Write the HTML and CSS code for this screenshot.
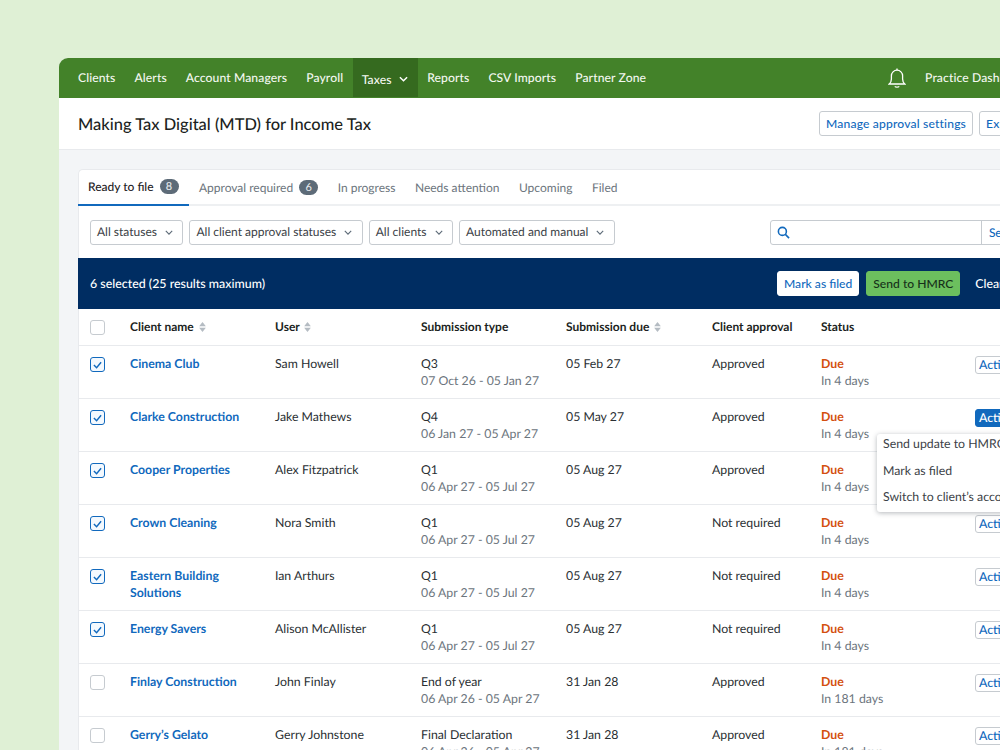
FILE: index.html
```html
<!DOCTYPE html>
<html lang="en">
<head>
<meta charset="utf-8">
<title>Making Tax Digital</title>
<link rel="stylesheet" href="styles.css">
</head>
<body>
<div class="app">
  <nav class="nav">
    <a class="nav-item">Clients</a>
    <a class="nav-item">Alerts</a>
    <a class="nav-item">Account Managers</a>
    <a class="nav-item">Payroll</a>
    <a class="nav-item active">Taxes <svg class="nav-chev" viewBox="0 0 10 6"><path d="M1 1l4 4 4-4"/></svg></a>
    <a class="nav-item">Reports</a>
    <a class="nav-item">CSV Imports</a>
    <a class="nav-item">Partner Zone</a>
    <svg class="bell" viewBox="0 0 18 20"><path d="M1.200 16c1.300-1.100 2.200-2.300 2.200-5V7.800a5.600 5.600 0 0 1 11.200 0V11c0 2.700.9 3.900 2.200 5z"/><path d="M6.800 18.400c.8 1 3.600 1 4.400 0"/><path d="M9 .6v1.600"/></svg>
    <a class="nav-item dash">Practice Dashboard</a>
  </nav>
  <header class="head">
    <h1>Making Tax Digital (MTD) for Income Tax</h1>
    <div class="head-actions">
      <button class="btn wide">Manage approval settings</button>
      <button class="btn wide">Export</button>
    </div>
  </header>
  <main class="content">
    <section class="card">
      <div class="tabs">
        <div class="tab current">Ready to file <span class="count">8</span></div>
        <div class="tab">Approval required <span class="count">6</span></div>
        <div class="tab">In progress</div>
        <div class="tab">Needs attention</div>
        <div class="tab">Upcoming</div>
        <div class="tab">Filed</div>
      </div>
      <div class="filters">
        <div class="select">All statuses <svg class="chev" viewBox="0 0 10 6"><path d="M1 1l4 4 4-4"/></svg></div>
        <div class="select">All client approval statuses <svg class="chev" viewBox="0 0 10 6"><path d="M1 1l4 4 4-4"/></svg></div>
        <div class="select">All clients <svg class="chev" viewBox="0 0 10 6"><path d="M1 1l4 4 4-4"/></svg></div>
        <div class="select">Automated and manual <svg class="chev" viewBox="0 0 10 6"><path d="M1 1l4 4 4-4"/></svg></div>
        <div class="search">
          <span class="search-field"><svg class="search-icon" viewBox="0 0 14 14"><circle cx="5.800" cy="5.800" r="4.300"/><path d="M9 9l4 4"/></svg></span>
          <span class="search-btn">Search</span>
        </div>
      </div>
      <div class="bulk">
        <span class="bulk-text">6 selected (25 results maximum)</span>
        <button class="btn small">Mark as filed</button>
        <button class="btn small green">Send to HMRC</button>
        <span class="clear">Clear</span>
      </div>
      <div class="row header">
        <span class="box"></span>
        <span>Client name <svg class="sort" viewBox="0 0 8 12"><path d="M4 0l4 5H0zM4 12l4-5H0z"/></svg></span>
        <span>User <svg class="sort" viewBox="0 0 8 12"><path d="M4 0l4 5H0zM4 12l4-5H0z"/></svg></span>
        <span>Submission type</span>
        <span>Submission due <svg class="sort" viewBox="0 0 8 12"><path d="M4 0l4 5H0zM4 12l4-5H0z"/></svg></span>
        <span>Client approval</span>
        <span>Status</span>
        <span></span>
      </div>
      <div class="row">
        <span class="box on"><svg viewBox="0 0 10 8"><path d="M1 4l3 3 5-6"/></svg></span>
        <a class="client">Cinema Club</a>
        <span>Sam Howell</span>
        <span>Q3<small>07 Oct 26 - 05 Jan 27</small></span>
        <span>05 Feb 27</span>
        <span>Approved</span>
        <span><b class="due">Due</b><small>In 4 days</small></span>
        <span class="act">Actions</span>
      </div>
      <div class="row">
        <span class="box on"><svg viewBox="0 0 10 8"><path d="M1 4l3 3 5-6"/></svg></span>
        <a class="client">Clarke Construction</a>
        <span>Jake Mathews</span>
        <span>Q4<small>06 Jan 27 - 05 Apr 27</small></span>
        <span>05 May 27</span>
        <span>Approved</span>
        <span><b class="due">Due</b><small>In 4 days</small></span>
        <span class="act open">Actions</span>
        <div class="menu">
          <div>Send update to HMRC</div>
          <div>Mark as filed</div>
          <div>Switch to client’s account</div>
        </div>
      </div>
      <div class="row">
        <span class="box on"><svg viewBox="0 0 10 8"><path d="M1 4l3 3 5-6"/></svg></span>
        <a class="client">Cooper Properties</a>
        <span>Alex Fitzpatrick</span>
        <span>Q1<small>06 Apr 27 - 05 Jul 27</small></span>
        <span>05 Aug 27</span>
        <span>Approved</span>
        <span><b class="due">Due</b><small>In 4 days</small></span>
        <span class="act">Actions</span>
      </div>
      <div class="row">
        <span class="box on"><svg viewBox="0 0 10 8"><path d="M1 4l3 3 5-6"/></svg></span>
        <a class="client">Crown Cleaning</a>
        <span>Nora Smith</span>
        <span>Q1<small>06 Apr 27 - 05 Jul 27</small></span>
        <span>05 Aug 27</span>
        <span>Not required</span>
        <span><b class="due">Due</b><small>In 4 days</small></span>
        <span class="act">Actions</span>
      </div>
      <div class="row">
        <span class="box on"><svg viewBox="0 0 10 8"><path d="M1 4l3 3 5-6"/></svg></span>
        <a class="client">Eastern Building Solutions</a>
        <span>Ian Arthurs</span>
        <span>Q1<small>06 Apr 27 - 05 Jul 27</small></span>
        <span>05 Aug 27</span>
        <span>Not required</span>
        <span><b class="due">Due</b><small>In 4 days</small></span>
        <span class="act">Actions</span>
      </div>
      <div class="row">
        <span class="box on"><svg viewBox="0 0 10 8"><path d="M1 4l3 3 5-6"/></svg></span>
        <a class="client">Energy Savers</a>
        <span>Alison McAllister</span>
        <span>Q1<small>06 Apr 27 - 05 Jul 27</small></span>
        <span>05 Aug 27</span>
        <span>Not required</span>
        <span><b class="due">Due</b><small>In 4 days</small></span>
        <span class="act">Actions</span>
      </div>
      <div class="row">
        <span class="box"></span>
        <a class="client">Finlay Construction</a>
        <span>John Finlay</span>
        <span>End of year<small>06 Apr 26 - 05 Apr 27</small></span>
        <span>31 Jan 28</span>
        <span>Approved</span>
        <span><b class="due">Due</b><small>In 181 days</small></span>
        <span class="act">Actions</span>
      </div>
      <div class="row">
        <span class="box"></span>
        <a class="client">Gerry’s Gelato</a>
        <span>Gerry Johnstone</span>
        <span>Final Declaration<small>06 Apr 26 - 05 Apr 27</small></span>
        <span>31 Jan 28</span>
        <span>Approved</span>
        <span><b class="due">Due</b><small>In 181 days</small></span>
        <span class="act">Actions</span>
      </div>
    </section>
  </main>
</div>
</body>
</html>
```
FILE: styles.css
```css
* { box-sizing: border-box; }
html, body { margin: 0; height: 750px; overflow: hidden; }
body {
  background: #dff0d5;
  font-family: "Lato", "Liberation Sans", sans-serif;
  font-size: 12.300px;
  color: #2a2f33;
  text-rendering: geometricPrecision;
}
.app {
  width: 1160px;
  margin: 58px 0 0 59px;
  background: #f3f5f7;
  border-radius: 9px 9px 0 0;
  overflow: hidden;
  height: 900px;
}
.nav {
  height: 40px;
  background: #438229;
  display: flex;
  align-items: stretch;
  padding-left: 9.500px;
  color: #fff;
}
.nav-item {
  display: flex;
  align-items: center;
  padding: 0 9.500px 1px;
  font-weight: 500;
  font-size: 12.150px;
  letter-spacing: 0.1px;
  color: #f4f8f1;
}
.nav-item.active {
  background: #356a1f;
  padding: 3px 10px 0 9px;
  margin: 0 0 1px;
}
.nav-chev { width: 9px; height: 6px; margin-left: 7px; fill: none; stroke: #fff; stroke-width: 1.600; }
.bell { width: 18px; height: 20px; margin: 10px 9.500px 0 232.500px; fill: none; stroke: #fff; stroke-width: 1.300; }
.dash { white-space: nowrap; }
.head {
  height: 52px;
  background: #fff;
  border-bottom: 1px solid #e8eaed;
  display: flex;
  align-items: center;
  padding: 0 0 1px 19px;
}
.head h1 {
  margin: 1px 0 0;
  font-size: 16.450px;
  font-weight: 500;
  color: #1c1f22;
}
.head-actions { margin-left: 448px; display: flex; gap: 6px; }
.btn {
  height: 25px;
  padding: 0 6px;
  font: inherit;
  font-weight: 500;
  font-size: 12.100px;
  color: #1169bd;
  background: #fff;
  border: 1px solid #c6cbd0;
  border-radius: 3px;
  white-space: nowrap;
}
.btn.wide { letter-spacing: 0.17px; }
.content { padding: 19px 0 0 19px; }
.card {
  background: #fff;
  border: 1px solid #e8eaed;
  border-right: 0;
  border-radius: 5px 0 0 0;
  width: 1100px;
}
.tabs {
  display: flex;
  height: 36px;
  border-bottom: 2px solid #eef0f2;
  margin-left: -1px;
  font-size: 12px;
}
.tab {
  height: 36px;
  display: flex;
  align-items: center;
  padding: 0 9.500px 2px 10px;
  color: #6c757d;
  white-space: nowrap;
}
.tab.current {
  color: #1f2326;
  font-weight: 500;
  border-bottom: 2px solid #1169bd;
  width: 111px;
}
.count {
  display: inline-block;
  width: 19px;
  height: 15px;
  line-height: 15px;
  margin-left: 6px;
  border-radius: 8px;
  background: #5d6b78;
  color: #e8ebee;
  font-size: 11px;
  text-align: center;
}
.filters {
  display: flex;
  height: 52px;
  align-items: center;
  gap: 6px;
  padding-left: 11px;
  font-size: 12px;
}
.select {
  height: 25px;
  padding: 0 6px 1px;
  display: flex;
  align-items: center;
  border: 1px solid #c6cbd0;
  border-radius: 3px;
  white-space: nowrap;
  color: #3c4247;
}
.chev { width: 8px; height: 5px; margin: 1px 3.500px 0 8px; fill: none; stroke: #5d6b78; stroke-width: 1.400; }
.search { margin-left: 149px; display: flex; height: 25px; border: 1px solid #c6cbd0; border-radius: 3px; }
.search-field { width: 211px; padding: 5px 0 0 6px; border-right: 1px solid #c6cbd0; }
.search-icon { display: block; width: 13px; height: 13px; fill: none; stroke: #1169bd; stroke-width: 1.700; }
.search-btn { padding: 0 7px; line-height: 23px; color: #1169bd; font-weight: 500; }
.bulk {
  height: 51px;
  margin-left: -1px;
  background: #002d62;
  color: #fff;
  display: flex;
  align-items: center;
  padding-left: 12px;
  font-weight: 500;
}
.bulk-text { width: 687px; font-size: 12.400px; }
.btn.small { height: 25px; border-color: #fff; }
.btn.green { margin-left: 7px; background: #6cbf5e; border-color: #6cbf5e; color: #16301a; }
.clear { margin-left: 15px; }
.row {
  position: relative;
  display: grid;
  grid-template-columns: 40px 145px 146px 145px 146px 109px 154px 80px;
  height: 53px;
  margin-left: -1px;
  padding: 9px 0 0 12px;
  border-bottom: 1px solid #e8eaed;
  line-height: 17px;
}
.row.header {
  height: 37px;
  padding-top: 9px;
  font-weight: 700;
  font-size: 12px;
  color: #1c1f22;
}
.row small { display: block; margin-top: -0.500px; font-size: 12.300px; color: #6c757d; }
.sort { width: 7px; height: 10px; margin-left: 2px; fill: #b5bcc3; vertical-align: -1px; }
.box {
  width: 15px;
  height: 15px;
  margin-top: 2px;
  border: 1px solid #c6cbd0;
  border-radius: 3px;
  background: #fff;
  display: flex;
  align-items: center;
  justify-content: center;
}
.box.on { border-color: #1169bd; background: #f4f9fe; }
.box svg { width: 9px; height: 8px; fill: none; stroke: #1169bd; stroke-width: 1.600; }
.client { color: #1169bd; font-weight: 700; padding-right: 20px; }
.due { color: #d4500f; font-weight: 700; }
.act {
  align-self: start;
  height: 18px;
  line-height: 16px;
  margin-top: 1px;
  width: 60px;
  padding-left: 3px;
  border: 1px solid #c6cbd0;
  border-radius: 3px;
  color: #1169bd;
  font-weight: 500;
}
.act.open { background: #1169bd; border-color: #1169bd; color: #fff; }
.menu {
  position: absolute;
  left: 799px;
  top: 35px;
  width: 150px;
  height: 78px;
  padding-left: 6px;
  background: #fff;
  border-radius: 3px;
  box-shadow: 0 1px 5px rgba(40, 50, 60, .35);
  color: #3c4247;
  z-index: 2;
  white-space: nowrap;
}
.menu div { height: 26.500px; line-height: 20px; }
```
